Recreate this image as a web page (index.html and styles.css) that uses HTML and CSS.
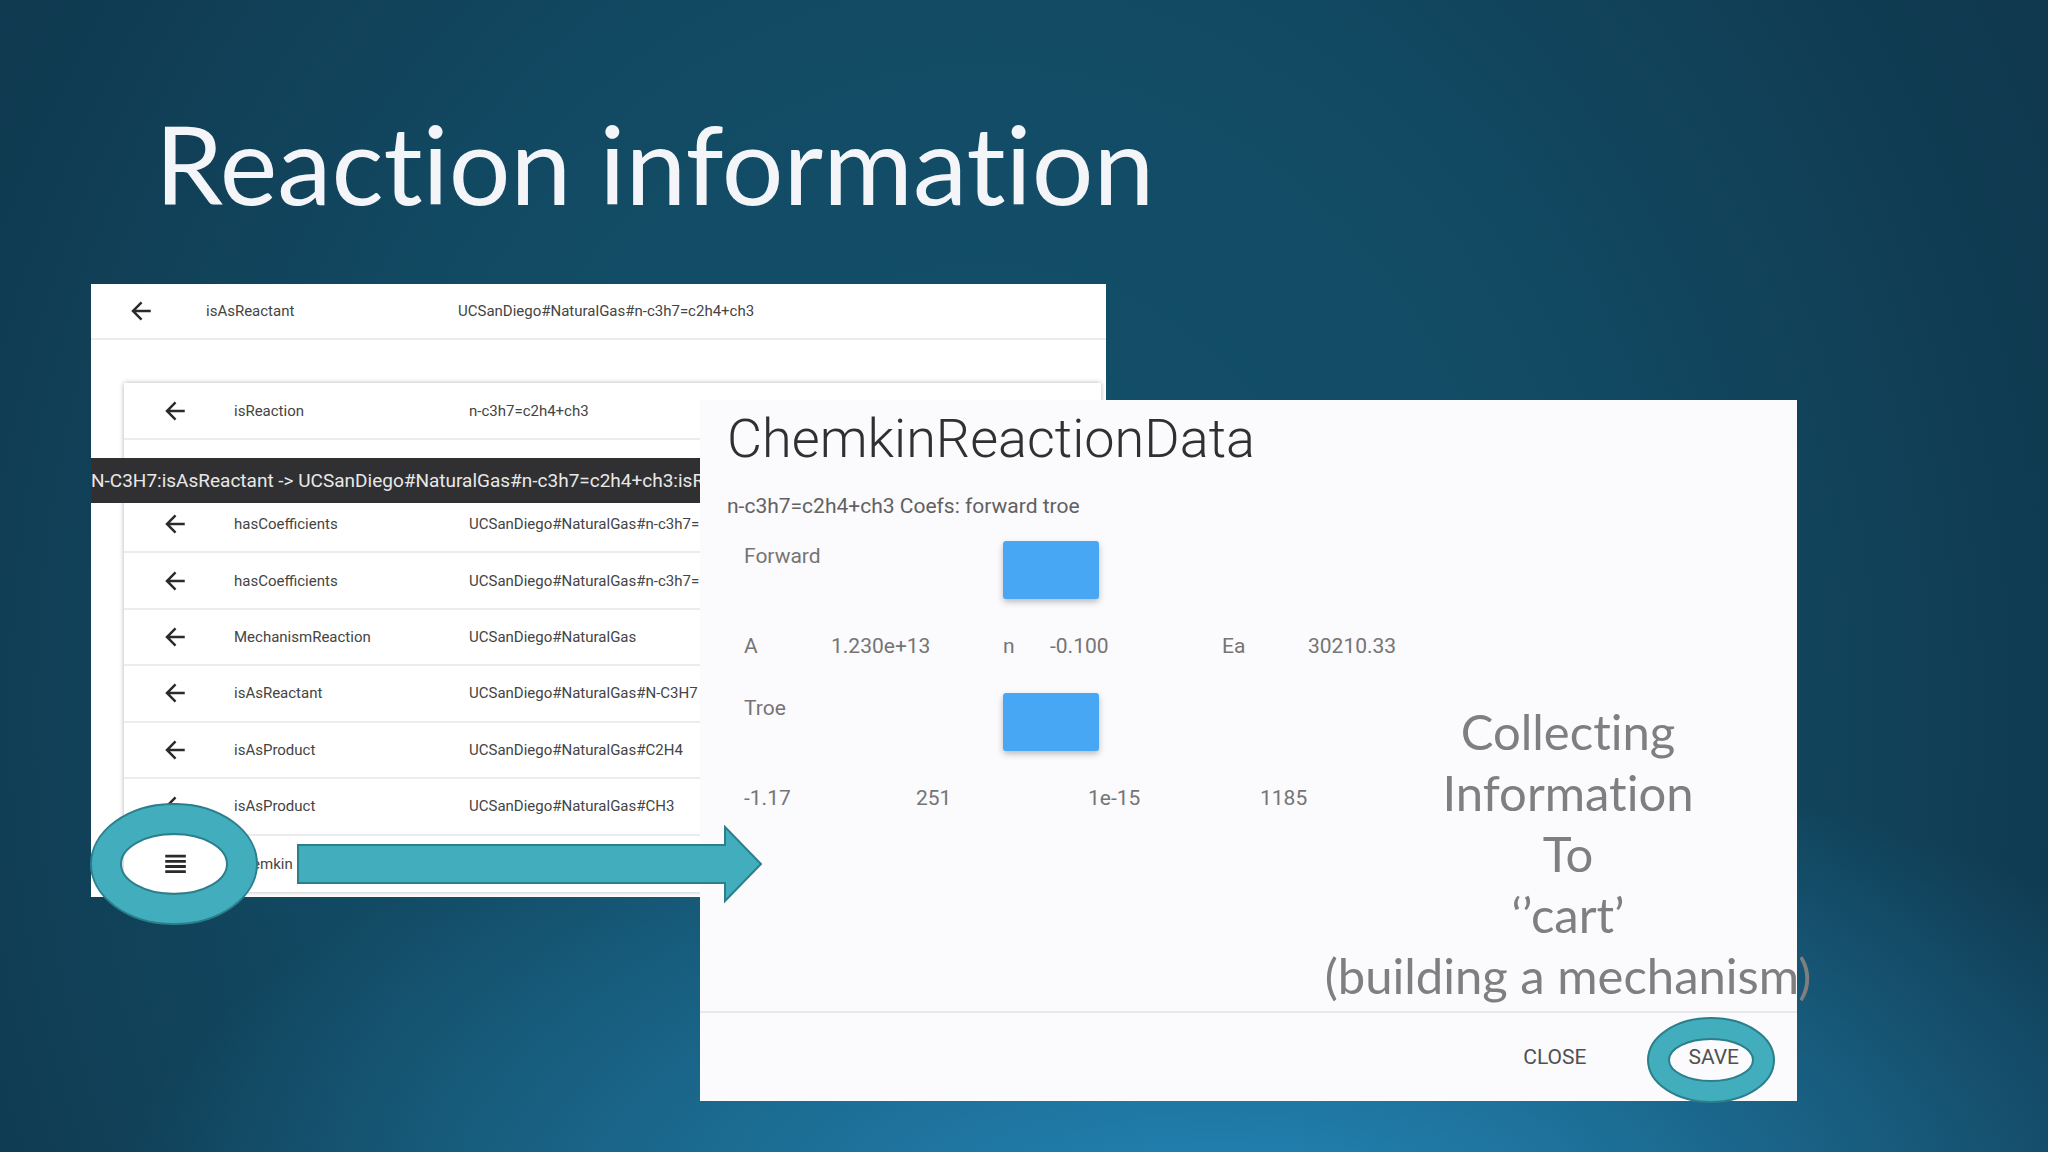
FILE: index.html
```html
<!DOCTYPE html>
<html lang="en">
<head>
    <meta charset="utf-8">
    <title>Reaction information</title>
    <link rel="stylesheet" href="styles.css">
</head>
<body>
<svg class="defs" width="0" height="0" aria-hidden="true">
    <symbol id="arrow" viewBox="0 0 24 24"><path d="M21 10.8H7.4l5.9-5.9L11.7 3.3 3 12l8.7 8.7 1.6-1.6-5.9-5.9H21z"/></symbol>
</svg>
<main class="slide">
    <h1 class="slide-title">Reaction information</h1>

    <div class="stage">
        <section class="browser">
            <table class="rows head-rows">
                <tr><td class="icon"><svg><use href="#arrow"/></svg></td><td class="prop">isAsReactant</td><td>UCSanDiego#NaturalGas#n-c3h7=c2h4+ch3</td></tr>
            </table>
            <div class="card">
                <table class="rows card-rows">
                    <tr><td class="icon"><svg><use href="#arrow"/></svg></td><td class="prop">isReaction</td><td>n-c3h7=c2h4+ch3</td></tr>
                    <tr><td class="icon"></td><td class="prop"></td><td></td></tr>
                    <tr><td class="icon"><svg><use href="#arrow"/></svg></td><td class="prop">hasCoefficients</td><td>UCSanDiego#NaturalGas#n-c3h7=</td></tr>
                    <tr><td class="icon"><svg><use href="#arrow"/></svg></td><td class="prop">hasCoefficients</td><td>UCSanDiego#NaturalGas#n-c3h7=</td></tr>
                    <tr><td class="icon"><svg><use href="#arrow"/></svg></td><td class="prop">MechanismReaction</td><td>UCSanDiego#NaturalGas</td></tr>
                    <tr><td class="icon"><svg><use href="#arrow"/></svg></td><td class="prop">isAsReactant</td><td>UCSanDiego#NaturalGas#N-C3H7</td></tr>
                    <tr><td class="icon"><svg><use href="#arrow"/></svg></td><td class="prop">isAsProduct</td><td>UCSanDiego#NaturalGas#C2H4</td></tr>
                    <tr><td class="icon"><svg><use href="#arrow"/></svg></td><td class="prop">isAsProduct</td><td>UCSanDiego#NaturalGas#CH3</td></tr>
                    <tr><td class="icon"><svg viewBox="0 0 24 24"><path d="M3 3.4h19v2.6H3zM3 8.2h19v2.6H3zM3 13h19v2.6H3zM3 17.8h19v2.6H3z"/></svg></td><td class="prop">Chemkin</td><td></td></tr>
                </table>
            </div>
            <div class="snackbar">N-C3H7:isAsReactant -&gt; UCSanDiego#NaturalGas#n-c3h7=c2h4+ch3:isRe</div>
        </section>

        <section class="dialog">
            <div class="dialog-body">
                <h2>ChemkinReactionData</h2>
                <p class="subtitle">n-c3h7=c2h4+ch3 Coefs: forward troe</p>
                <div class="group">
                    <span>Forward</span>
                    <button class="swatch" aria-label="Forward"></button>
                </div>
                <div class="values forward">
                    <span>A</span><span>1.230e+13</span><span>n</span><span>-0.100</span><span>Ea</span><span>30210.33</span>
                </div>
                <div class="group">
                    <span>Troe</span>
                    <button class="swatch" aria-label="Troe"></button>
                </div>
                <div class="values troe">
                    <span>-1.17</span><span>251</span><span>1e-15</span><span>1185</span>
                </div>
            </div>
            <footer class="actions">
                <button class="action">CLOSE</button>
                <button class="action">SAVE</button>
            </footer>
        </section>

        <p class="note">Collecting<br>Information<br>To<br>‘’cart’<br>(building a mechanism)</p>

        <svg class="mark ring-menu" viewBox="0 0 168 122">
            <path fill-rule="evenodd" d="M1 61a83 60 0 1 0 166 0a83 60 0 1 0 -166 0zM31 61a53 30 0 1 0 106 0a53 30 0 1 0 -106 0z"/>
        </svg>
        <svg class="mark pointer" viewBox="0 0 466 80">
            <path d="M1 20H428V2L464 39L428 76V58H1z"/>
        </svg>
        <svg class="mark ring-save" viewBox="0 0 130 88">
            <path fill-rule="evenodd" d="M1 44a63 42 0 1 0 126 0a63 42 0 1 0 -126 0zM22 44a42 21 0 1 0 84 0a42 21 0 1 0 -84 0z"/>
        </svg>
    </div>
</main>
</body>
</html>
```
FILE: styles.css
```css
* {
    box-sizing: border-box;
}
body {
    margin: 0;
    font-family: Roboto, sans-serif;
}
.defs {
    position: absolute;
}
.slide {
    min-height: 100vh;
    overflow: hidden;
    background:
        radial-gradient(ellipse 55% 45% at 60% 108%, #2488ba 0%, rgba(36, 136, 186, 0) 100%),
        radial-gradient(ellipse 62% 130% at 48% 62%, #14526f 0%, #124a63 50%, #103d54 80%, #0f364c 100%);
}
.slide-title {
    margin: 0;
    padding: 93px 155px 0;
    height: 284px;
    font: 400 109px/140px Lato, sans-serif;
    font-variant-ligatures: none;
    color: #f4f5f9;
}
/* the windows are laid over each other like on a desktop */
.stage {
    position: relative;
    height: 868px;
}
.browser {
    position: absolute;
    left: 91px;
    top: 0;
    width: 1015px;
    height: 613px;
    overflow: hidden;
    background: #fff;
}
.rows {
    width: 100%;
    border-collapse: separate;
    border-spacing: 0;
    font-size: 15px;
    color: #444;
}
.rows td {
    padding: 0;
    border-bottom: 2px solid #ececee;
}
.rows svg {
    display: block;
    width: 26px;
    height: 26px;
    fill: #2b2b2b;
}
.rows .icon {
    width: 115px;
    padding-left: 37px;
}
.rows .prop {
    width: 252px;
}
.head-rows {
    height: 56px;
}
.card {
    margin: 43px 5px 0 33px;
    padding-top: 1px;
    box-shadow: 0 0 5px rgba(0, 0, 0, 0.3);
}
.card-rows {
    height: 508px;
}
.card-rows td {
    height: 56px;
}
.card-rows .icon {
    width: 110px;
    padding-left: 38px;
}
.card-rows .prop {
    width: 235px;
}
.card-rows tr:last-child td {
    border-bottom: 0;
}
.snackbar {
    position: absolute;
    left: 0;
    top: 174px;
    width: 100%;
    background: #303032;
    color: #e8e8e8;
    font-size: 19px;
    line-height: 45px;
    white-space: nowrap;
}
.dialog {
    position: absolute;
    left: 700px;
    top: 116px;
    width: 1097px;
    height: 701px;
    display: flex;
    flex-direction: column;
    background: #fbfafd;
    color: #757575;
    font-size: 21px;
}
.dialog-body {
    flex: 1;
    padding: 7px 27px;
}
.dialog h2 {
    margin: 0;
    font-size: 54px;
    font-weight: 300;
    line-height: 64px;
    color: #303030;
}
.subtitle {
    margin: 22px 0;
    line-height: 26px;
    color: #616161;
}
.group {
    display: grid;
    grid-template-columns: 259px 96px;
    padding-left: 17px;
    line-height: 30px;
}
.swatch {
    height: 58px;
    border: 0;
    border-radius: 3px;
    background: #47a7f5;
    box-shadow: 0 3px 6px rgba(0, 0, 0, 0.25);
}
.values {
    display: grid;
    padding-left: 17px;
    line-height: 30px;
}
.forward {
    grid-template-columns: 87px 172px 47px 172px 86px 1fr;
    margin: 32px 0;
}
.troe {
    grid-template-columns: repeat(3, 172px) 1fr;
    margin-top: 32px;
}
.actions {
    display: flex;
    justify-content: flex-end;
    gap: 70px;
    height: 90px;
    padding: 0 42px;
    border-top: 2px solid #e8e8eb;
}
.action {
    padding: 0 16px;
    border: 0;
    background: none;
    color: #505050;
    font: 400 21px Roboto, sans-serif;
}
.note {
    position: absolute;
    left: 1288px;
    top: 417px;
    width: 560px;
    margin: 0;
    font: 400 49px/61px Lato, sans-serif;
    font-variant-ligatures: none;
    color: #7f7f7f;
    text-align: center;
}
.mark {
    position: absolute;
    fill: #42aebd;
    stroke: #2b7f8b;
    stroke-width: 2;
}
.ring-menu {
    left: 90px;
    top: 519px;
    width: 168px;
    height: 122px;
}
.pointer {
    left: 297px;
    top: 541px;
    width: 466px;
    height: 80px;
}
.ring-save {
    left: 1647px;
    top: 732px;
    width: 130px;
    height: 88px;
}
```
